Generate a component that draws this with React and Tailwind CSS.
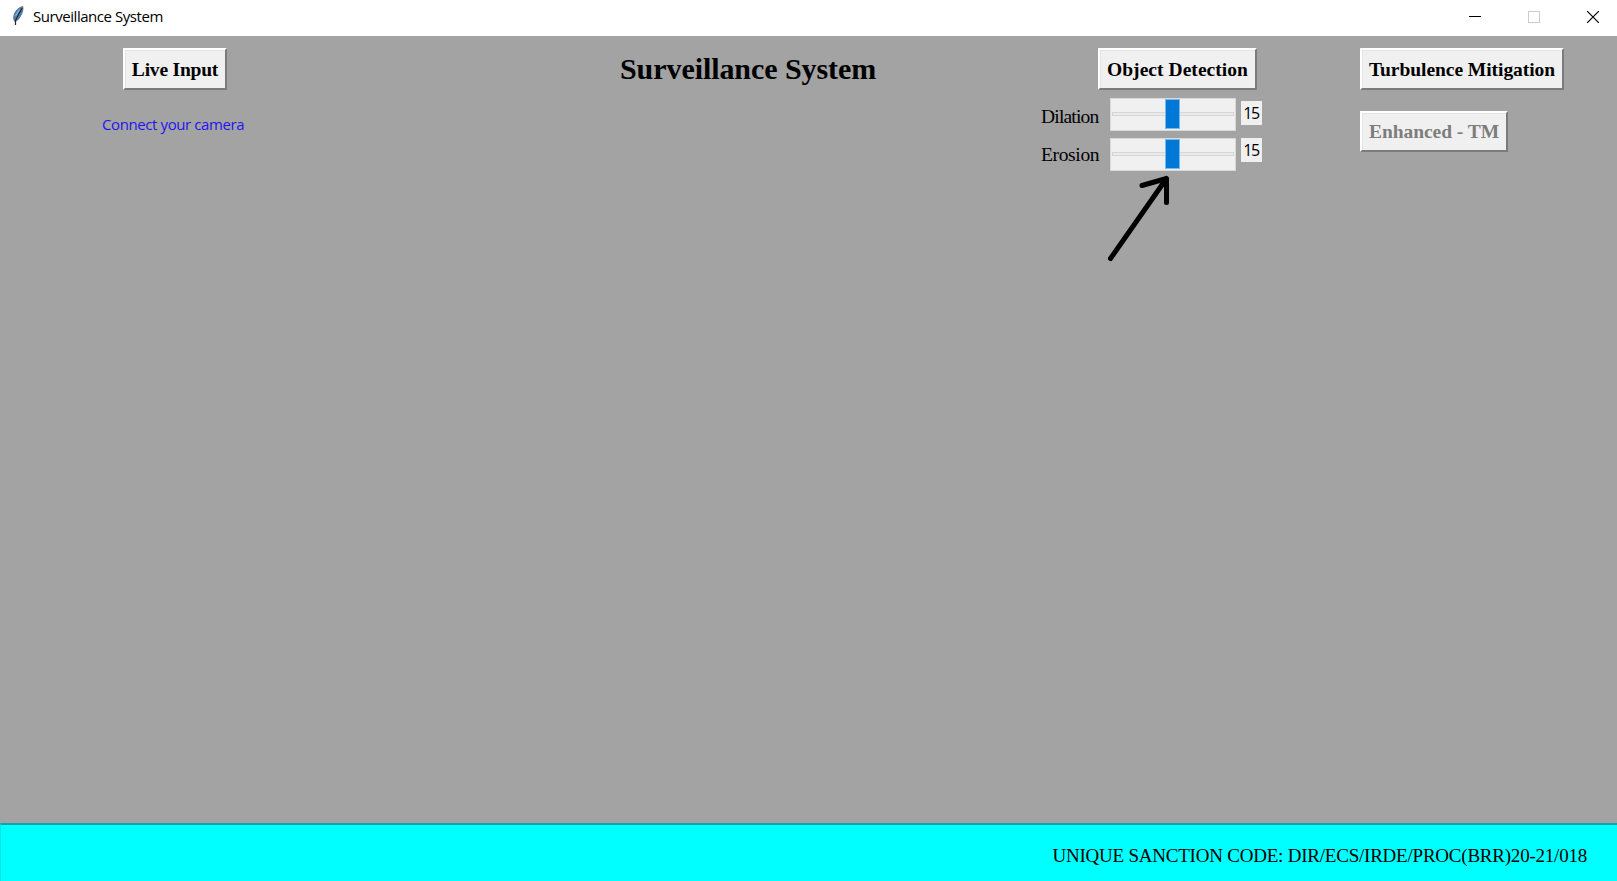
import React from "react";

function ClassicButton({ children, className = "", disabled = false }) {
  return (
    <button
      disabled={disabled}
      className={`flex items-center justify-center whitespace-nowrap border-2 border-t-white border-l-white border-r-[#7b7b7b] border-b-[#7b7b7b] bg-[#f0f0f0] font-bold shadow-[inset_1px_1px_0_#e4e4e4] ${className}`}
    >
      {children}
    </button>
  );
}

function SliderRow({ label, labelClass, labelBox, valueBox }) {
  return (
    <div className="flex h-[33px] items-start">
      <span className={`w-[69px] whitespace-nowrap leading-[24px] ${labelBox} ${labelClass}`}>{label}</span>
      <div className="flex h-[33px] w-[126px] items-center justify-center border border-[#d8d8d8] bg-[#f0f0f0] pb-px">
        <div className="relative h-1 w-[122px] border border-[#d6d6d6] bg-[#e7eaea]">
          <div className="absolute -top-[14px] left-[52px] h-[30px] w-[15px] border border-[#7ab8ea] bg-[#0078d7]" />
        </div>
      </div>
      <span className={`ml-[5px] flex h-[24px] w-[21px] items-center justify-center bg-[#f0f0f0] pr-px pb-px font-['Open_Sans',sans-serif] text-[16px] leading-none tracking-[-1.3px] text-black ${valueBox}`}>
        15
      </span>
    </div>
  );
}

function Feather() {
  return (
    <svg className="h-5 w-3" viewBox="0 0 12 20">
      <path d="M10.8.5C7 1.300 3.700 4.200 2.300 8.300C1.500 10.800 1.500 13 2.500 15.200C4.500 15.500 6.500 13.500 8.300 10.500C10 7.500 11.400 4 10.800.5Z" fill="#4a80b8" stroke="#6a737c" strokeWidth="1" />
      <path d="M7.500 3.500L3.500 10" stroke="#85b4df" strokeWidth="1.300" />
      <path d="M10.200 2L6.500 8.500L3.500 14.500V19" fill="none" stroke="#202a33" strokeWidth="1.200" />
    </svg>
  );
}

function TitleBar() {
  return (
    <header className="flex h-9 items-center justify-between bg-white pl-3 pr-[18px]">
      <div className="flex items-center pb-1">
        <Feather />
        <h1 className="ml-[9px] whitespace-nowrap font-['Open_Sans',sans-serif] text-[15px] leading-5 tracking-[-0.45px] text-black">
          Surveillance System
        </h1>
      </div>
      <div className="flex items-center gap-[47px] pb-[3px]">
        <svg className="h-3 w-3" viewBox="0 0 12 12" shapeRendering="crispEdges">
          <path d="M0 5.500H12" stroke="#000" />
        </svg>
        <svg className="h-3 w-3" viewBox="0 0 12 12" shapeRendering="crispEdges">
          <rect x=".5" y=".5" width="11" height="11" fill="none" stroke="#ccc" />
        </svg>
        <svg className="h-3 w-3" viewBox="0 0 12 12">
          <path d="M0 0L12 12M12 0L0 12" stroke="#000" strokeWidth="1.200" />
        </svg>
      </div>
    </header>
  );
}

export default function App() {
  return (
    <div className="flex h-[881px] w-[1617px] flex-col overflow-hidden bg-[#a3a3a3] font-['Liberation_Serif',serif] text-[19.5px] text-black">
      <TitleBar />
      <main className="flex flex-1 items-start pt-3">
        <section className="w-[620px] pl-[102px]">
          <ClassicButton className="ml-[21px] h-[42px] w-[104px] pt-px tracking-[-0.2px]">Live Input</ClassicButton>
          <p className="mt-[24px] whitespace-nowrap font-['Open_Sans',sans-serif] text-[15px] leading-5 tracking-[-0.4px] text-[#2414f0]">
            Connect your camera
          </p>
        </section>
        <h2 className="w-[421px] whitespace-nowrap text-[30px] leading-[41px] font-bold tracking-[-0.07px]">Surveillance System</h2>
        <section className="relative w-[319px]">
          <ClassicButton className="ml-[57px] h-[42px] w-[159px] pt-px tracking-[0.05px]">Object Detection</ClassicButton>
          <div className="mt-2 flex flex-col gap-[7px]">
            <SliderRow label="Dilation" labelClass="tracking-[-0.8px]" labelBox="mt-[7px]" valueBox="mt-[3px]" />
            <SliderRow label="Erosion" labelClass="tracking-[-0.35px]" labelBox="mt-[5px]" valueBox="" />
          </div>
          <svg className="absolute top-[124px] left-[62px] h-[100px] w-[80px]" viewBox="0 0 80 100" fill="none" stroke="#000" strokeWidth="5" strokeLinecap="round" strokeLinejoin="round">
            <path d="M7.500 86.500L63.500 6.500M39 13.500L63.500 6.500V30.500" />
          </svg>
        </section>
        <section className="flex flex-col items-start gap-[21px]">
          <ClassicButton className="h-[42px] w-[204px] pt-px tracking-[-0.05px]">Turbulence Mitigation</ClassicButton>
          <ClassicButton disabled className="h-[41px] w-[148px] tracking-[-0.05px] text-[#7d7d7d]">Enhanced - TM</ClassicButton>
        </section>
      </main>
      <footer className="flex h-[58px] items-center justify-end border-t-2 border-l border-t-[#14a3a3] border-l-[#00e5e5] bg-[#00ffff] pt-[5px] pr-[30px]">
        <span className="whitespace-nowrap text-[19px] tracking-[-0.22px] leading-6">
          UNIQUE SANCTION CODE: DIR/ECS/IRDE/PROC(BRR)20-21/018
        </span>
      </footer>
    </div>
  );
}
